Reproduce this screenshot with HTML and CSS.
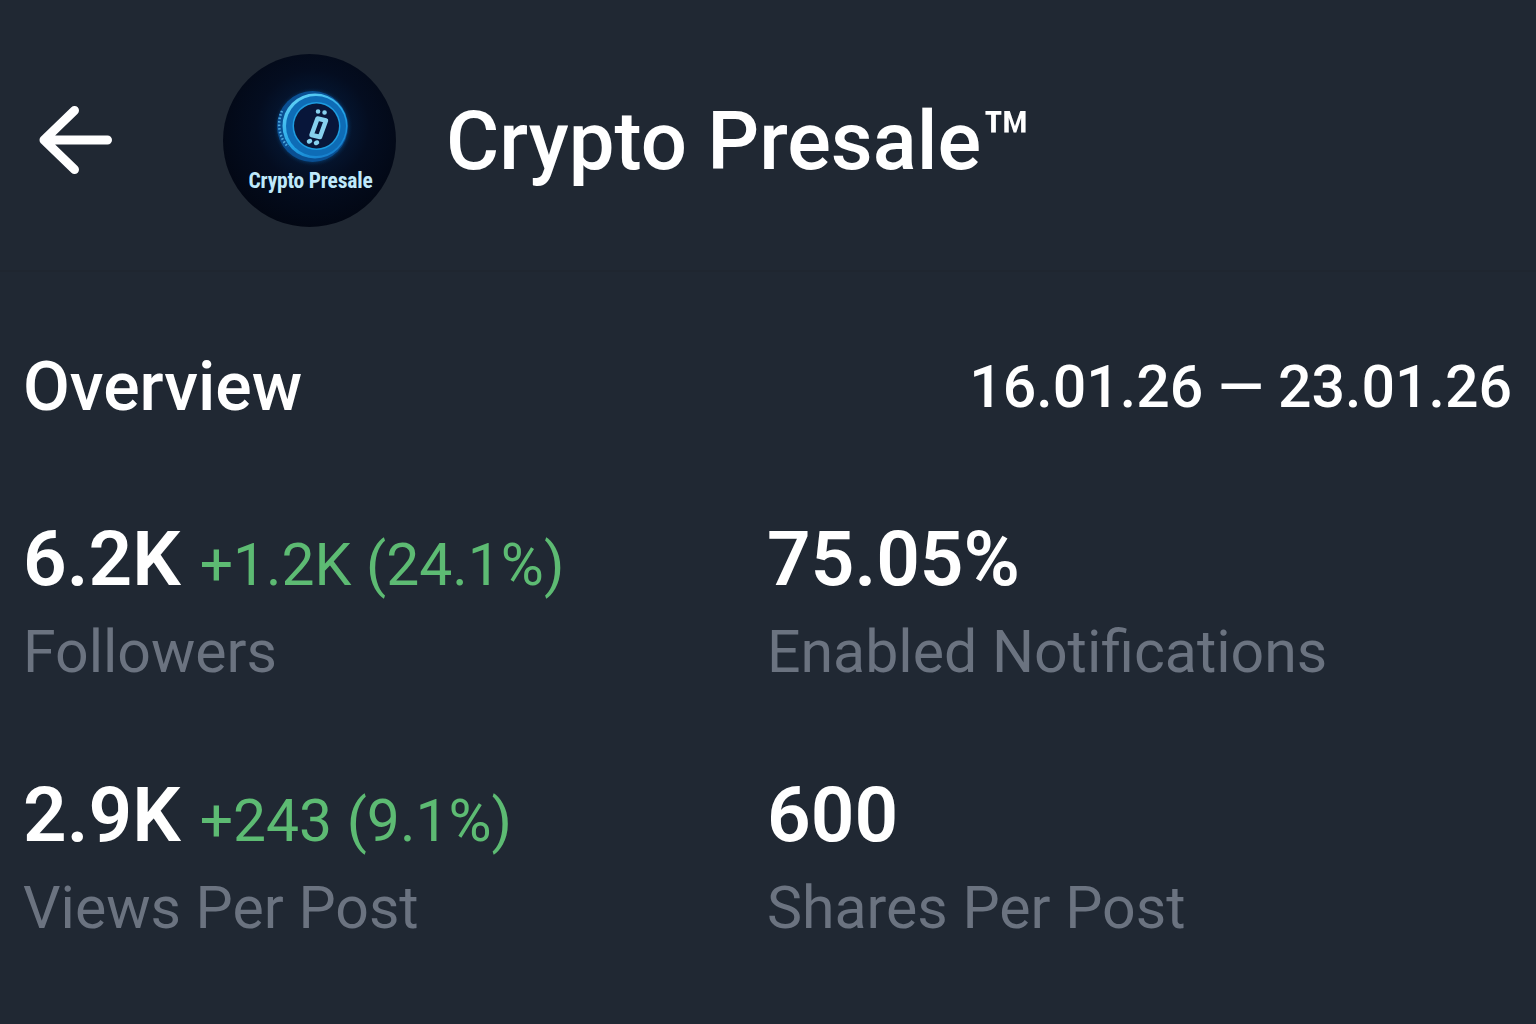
FILE: index.html
```html
<!DOCTYPE html>
<html lang="en">
<head>
<meta charset="utf-8">
<title>Crypto Presale Statistics</title>
<link rel="stylesheet" href="styles.css">
</head>
<body>
<main class="screen">
  <header class="header">
    <button class="back" aria-label="Back">
      <svg viewBox="0 0 76 68" width="76" height="68" fill="none" stroke="#fff" stroke-width="9" stroke-linecap="round" stroke-linejoin="round"><path d="M7 34H70.500M37.500 4.500 7 34 37.500 63.500"/></svg>
    </button>
    <div class="avatar">
      <svg class="coin" viewBox="0 0 80 80" width="80" height="80">
        <defs>
          <radialGradient id="glow" cx="50%" cy="50%" r="50%"><stop offset="0.78" stop-color="#0b6ab8" stop-opacity=".85"/><stop offset="1" stop-color="#04142c" stop-opacity="0"/></radialGradient>
          <linearGradient id="rim" x1="0.200" y1="0" x2="0.800" y2="1"><stop offset="0" stop-color="#63d4f7"/><stop offset=".55" stop-color="#22a4e6"/><stop offset="1" stop-color="#1478c8"/></linearGradient>
        </defs>
        <circle cx="40" cy="40" r="40" fill="url(#glow)"/>
        <circle cx="39.500" cy="39.500" r="35.500" fill="#0a4f92"/>
        <path d="M9 24A33 33 0 0 0 15 60" fill="none" stroke="#4fa9de" stroke-width="2.500" stroke-dasharray="1.500 2"/>
        <circle cx="42" cy="39" r="32.500" fill="url(#rim)"/>
        <circle cx="43" cy="39" r="30" fill="#0e6cb6"/>
        <circle cx="43.500" cy="39" r="24" fill="#1e9ce0"/>
        <circle cx="43.500" cy="39" r="22.500" fill="#08163a"/>
        <g fill="none" stroke="#86d0ee" stroke-width="4.500" stroke-linecap="round" stroke-linejoin="round"><path d="M44.500 31.500 53 33.500 47 50 38.500 48ZM45 24.500h.1M51.500 25.500h.1M37 54l-1 .5M44 55.500l-1 .5"/></g>
      </svg>
      <span class="avatar-name">Crypto Presale</span>
    </div>
    <h1 class="title">Crypto Presale™</h1>
  </header>
  <section class="overview">
    <div class="overview-head">
      <h2 class="overview-title">Overview</h2>
      <span class="dates">16.01.26 — 23.01.26</span>
    </div>
    <div class="stats">
      <div class="stat">
        <div class="stat-value">6.2K <span class="delta">+1.2K (24.1%)</span></div>
        <div class="stat-label">Followers</div>
      </div>
      <div class="stat">
        <div class="stat-value">75.05%</div>
        <div class="stat-label">Enabled Notifications</div>
      </div>
      <div class="stat">
        <div class="stat-value">2.9K <span class="delta">+243 (9.1%)</span></div>
        <div class="stat-label">Views Per Post</div>
      </div>
      <div class="stat">
        <div class="stat-value">600</div>
        <div class="stat-label">Shares Per Post</div>
      </div>
    </div>
  </section>
</main>
</body>
</html>
```
FILE: styles.css
```css
* { box-sizing: border-box; }
html, body { margin: 0; height: 100%; }
body { background: #202833; color: #fff; font-family: Roboto, "Liberation Sans", sans-serif; overflow: hidden; }
.screen { width: 1536px; height: 1024px; display: flex; flex-direction: column; }
.header { height: 272px; display: flex; align-items: center; padding: 10px 0 0 37px; border-bottom: 2px solid #1f2630; }
.back { width: 186px; height: 68px; padding: 0; border: 0; background: none; display: flex; align-items: center; }
.avatar { width: 173px; height: 173px; border-radius: 50%; background: radial-gradient(circle at 52% 42%, #062247 0, #040d20 42%, #01030a 100%); display: flex; flex-direction: column; align-items: center; padding-top: 33px; flex: none; }
.coin { display: block; margin-left: 6px; }
.avatar-name { font-size: 21.500px; font-weight: 700; font-stretch: condensed; letter-spacing: -.2px; color: #bfe9fb; line-height: 24px; margin-top: 2px; margin-left: 2px; white-space: nowrap; }
.title { margin: 2px 0 0 50px; font-size: 81.500px; font-weight: 500; line-height: 90px; white-space: nowrap; }
.overview { padding: 0 24px 0 23px; }
.overview-head { display: flex; justify-content: space-between; align-items: center; height: 90px; margin-top: 70px; }
.overview-title { margin: 0; font-size: 68px; font-weight: 500; line-height: 90px; }
.dates { font-size: 59px; font-weight: 500; line-height: 90px; }
.stats { display: grid; grid-template-columns: 744px 1fr; row-gap: 83px; margin-top: 82px; }
.stat-value { font-size: 76.500px; font-weight: 560; line-height: 90px; height: 90px; white-space: nowrap; }
.delta { font-size: 58.800px; font-weight: 400; line-height: 1; color: #5dbb73; }
.stat-label { font-size: 59px; color: #6b7380; line-height: 70px; margin-top: 13px; white-space: nowrap; }
```
